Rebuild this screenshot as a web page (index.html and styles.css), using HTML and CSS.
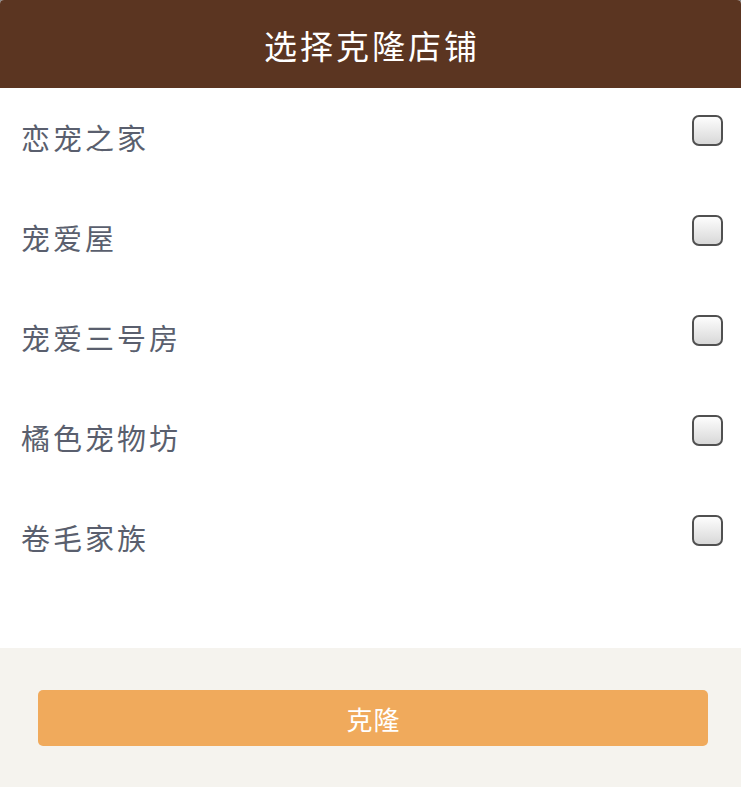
FILE: index.html
```html
<!DOCTYPE html>
<html lang="zh">
<head>
<meta charset="utf-8">
<link rel="stylesheet" href="styles.css">
</head>
<body>
<div class="page">
  <header class="header">选择克隆店铺</header>
  <ul class="list">
    <li class="row"><span class="name">恋宠之家</span><span class="check"></span></li>
    <li class="row"><span class="name">宠爱屋</span><span class="check"></span></li>
    <li class="row"><span class="name">宠爱三号房</span><span class="check"></span></li>
    <li class="row"><span class="name">橘色宠物坊</span><span class="check"></span></li>
    <li class="row"><span class="name">卷毛家族</span><span class="check"></span></li>
  </ul>
  <footer class="footer">
    <button class="btn">克隆</button>
  </footer>
</div>
</body>
</html>
```
FILE: styles.css
```css
html, body {
  margin: 0;
  padding: 0;
  background: #8a8a8a;
}
body {
  font-family: "Noto Sans CJK SC", "Noto Sans", sans-serif;
}
.page {
  width: 741px;
  height: 787px;
  display: flex;
  flex-direction: column;
  background: #ffffff;
  border-radius: 4px 4px 0 0;
  overflow: hidden;
}
.header {
  height: 88px;
  background: #5b3521;
  color: #ffffff;
  font-size: 33px;
  letter-spacing: 3px;
  display: flex;
  align-items: center;
  justify-content: center;
  padding-top: 1px;
  padding-left: 3px;
  box-sizing: border-box;
}
.list {
  list-style: none;
  margin: 0;
  padding: 0;
  height: 560px;
}
.row {
  height: 100px;
  display: flex;
  justify-content: space-between;
  align-items: flex-start;
  padding: 0 18px 0 21px;
  box-sizing: border-box;
}
.name {
  margin-top: 29px;
  font-size: 29px;
  line-height: 40px;
  letter-spacing: 3px;
  color: #5a5f6e;
}
.check {
  margin-top: 27px;
  width: 27px;
  height: 27px;
  border: 2px solid #505050;
  border-radius: 7px;
  background: linear-gradient(#fdfdfd, #d8d8d8);
}
.footer {
  flex: 1;
  background: #f5f3ee;
  padding: 42px 33px 0 38px;
}
.btn {
  display: block;
  width: 100%;
  height: 56px;
  border: none;
  border-radius: 5px;
  background: #f0aa5c;
  color: #ffffff;
  font-family: "Noto Sans CJK SC", "Noto Sans", sans-serif;
  font-size: 26px;
  letter-spacing: 1px;
  padding: 0 0 0 1px;
}
```
